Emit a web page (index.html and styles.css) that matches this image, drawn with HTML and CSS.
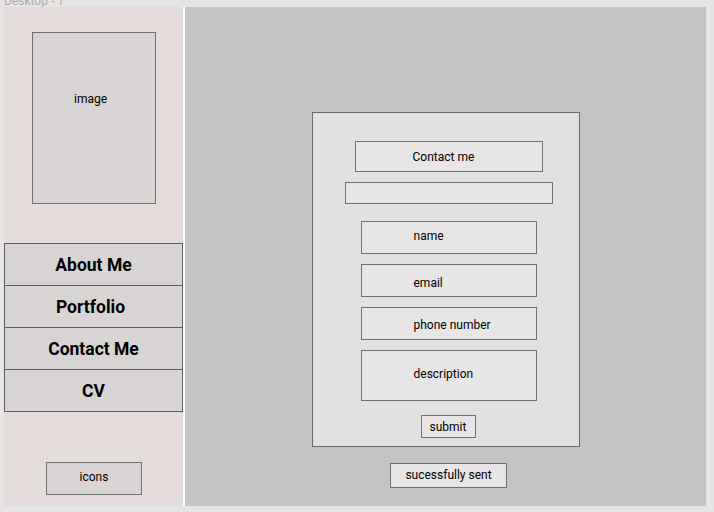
FILE: index.html
```html
<!DOCTYPE html>
<html>
<head>
<meta charset="utf-8">
<link rel="stylesheet" href="styles.css">
</head>
<body>
<div class="canvas">
  <div class="frame-label">Desktop - 1</div>
  <div class="frame">
    <aside class="sidebar">
      <div class="image-box"><span>image</span></div>
      <nav class="nav">
        <div class="nav-item">About Me</div>
        <div class="nav-item nav-shift">Portfolio</div>
        <div class="nav-item">Contact Me</div>
        <div class="nav-item">CV</div>
      </nav>
      <div class="icons-box">icons</div>
    </aside>
    <main class="main">
      <div class="card">
        <div class="box title">Contact me</div>
        <div class="box blank"></div>
        <div class="box field f-name">name</div>
        <div class="box field f-email">email</div>
        <div class="box field f-phone">phone number</div>
        <div class="box field f-desc">description</div>
        <div class="box submit">submit</div>
      </div>
      <div class="box sent">sucessfully sent</div>
    </main>
  </div>
</div>
</body>
</html>
```
FILE: styles.css
```css
* { box-sizing: border-box; }
html, body { margin: 0; padding: 0; }
body {
  background: #e5e5e5;
  font-family: Roboto, "Noto Sans", sans-serif;
  color: #000;
  overflow: hidden;
}
.canvas {
  width: 714px;
  height: 512px;
  padding-left: 4px;
}
.frame-label {
  height: 12px;
  margin-top: -5px;
  font-size: 12px;
  line-height: 12px;
  color: #ababab;
}
.frame {
  display: flex;
  width: 702px;
  height: 499px;
}
.sidebar {
  width: 181px;
  background: #e4dcdb;
  border-right: 2px solid #ffffff;
  display: flex;
  flex-direction: column;
}
.image-box {
  margin: 25px 0 0 28px;
  width: 124px;
  height: 172px;
  background: #d9d4d4;
  border: 1px solid #6f6f6f;
  font-size: 12px;
  padding: 59px 0 0 41px;
}
.nav {
  margin-top: 39px;
  display: flex;
  flex-direction: column;
}
.nav-item {
  height: 43px;
  margin-top: -1px;
  background: #d9d4d4;
  border: 1px solid #5d5d5d;
  font-size: 17.5px;
  font-weight: 700;
  display: flex;
  align-items: center;
  justify-content: center;
}
.nav-item:first-child { margin-top: 0; }
.nav-shift { padding-right: 6px; }
.icons-box {
  margin: 50px 0 0 42px;
  width: 96px;
  height: 33px;
  background: #d9d4d4;
  border: 1px solid #6f6f6f;
  font-size: 12px;
  display: flex;
  justify-content: center;
  padding-top: 7px;
}
.main {
  flex: 1;
  background: #c4c4c4;
  display: flex;
  flex-direction: column;
  align-items: center;
  padding-top: 105px;
}
.card {
  width: 268px;
  height: 335px;
  background: #e1e1e1;
  border: 1px solid #6b6b6b;
  display: flex;
  flex-direction: column;
  align-items: flex-start;
  padding-top: 28px;
}
.box {
  background: #e7e5e6;
  border: 1px solid #6f6f6f;
  font-size: 12px;
  display: flex;
  align-items: center;
}
.title {
  margin-left: 42px;
  width: 188px;
  height: 31px;
  padding-left: 57px;
  padding-top: 1px;
}
.blank {
  margin: 10px 0 0 32px;
  width: 208px;
  height: 22px;
}
.field {
  margin-left: 48px;
  width: 176px;
  padding-left: 52px;
}
.f-name { margin-top: 17px; height: 33px; padding-bottom: 3px; }
.f-email { margin-top: 10px; height: 33px; padding-top: 4px; }
.f-phone { margin-top: 10px; height: 33px; padding-top: 3px; }
.f-desc { margin-top: 10px; height: 51px; padding-bottom: 3px; }
.submit {
  margin: 14px 0 0 108px;
  width: 55px;
  height: 23px;
  justify-content: center;
}
.sent {
  margin-top: 16px;
  margin-left: 6px;
  width: 117px;
  height: 25px;
  justify-content: center;
  padding-bottom: 2px;
}
```
